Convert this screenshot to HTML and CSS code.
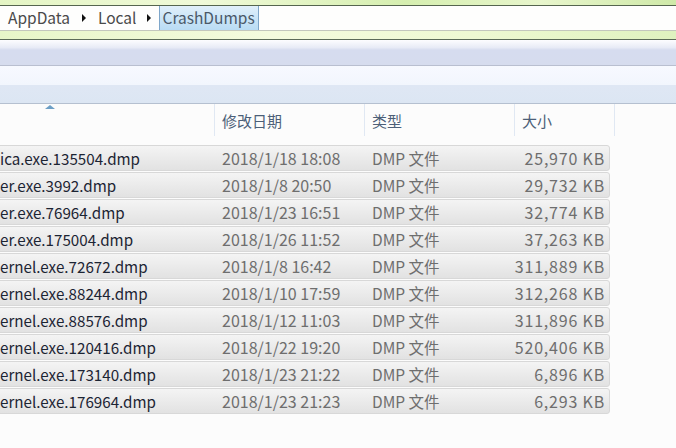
FILE: index.html
```html
<!DOCTYPE html>
<html>
<head>
<meta charset="utf-8">
<link rel="stylesheet" href="styles.css">
</head>
<body>
<div class="chrome">
  <div class="green-top"></div>
  <div class="address">
    <span class="crumb">AppData</span>
    <span class="arrow"></span>
    <span class="crumb">Local</span>
    <span class="arrow last"></span>
    <span class="crumb current">CrashDumps</span>
  </div>
  <div class="green-bottom"></div>
  <div class="lavender"></div>
  <div class="toolbar"></div>
</div>
<div class="header">
  <div class="hcell name"><span class="sort"></span></div>
  <div class="hcell date">修改日期</div>
  <div class="hcell type">类型</div>
  <div class="hcell size">大小</div>
  <div class="hcell rest"></div>
</div>
<div class="list">
  <div class="row"><span class="c-name">ica.exe.135504.dmp</span><span class="c-date">2018/1/18 18:08</span><span class="c-type">DMP 文件</span><span class="c-size">25,970 KB</span></div>
  <div class="row"><span class="c-name">er.exe.3992.dmp</span><span class="c-date">2018/1/8 20:50</span><span class="c-type">DMP 文件</span><span class="c-size">29,732 KB</span></div>
  <div class="row"><span class="c-name">er.exe.76964.dmp</span><span class="c-date">2018/1/23 16:51</span><span class="c-type">DMP 文件</span><span class="c-size">32,774 KB</span></div>
  <div class="row"><span class="c-name">er.exe.175004.dmp</span><span class="c-date">2018/1/26 11:52</span><span class="c-type">DMP 文件</span><span class="c-size">37,263 KB</span></div>
  <div class="row"><span class="c-name">ernel.exe.72672.dmp</span><span class="c-date">2018/1/8 16:42</span><span class="c-type">DMP 文件</span><span class="c-size">311,889 KB</span></div>
  <div class="row"><span class="c-name">ernel.exe.88244.dmp</span><span class="c-date">2018/1/10 17:59</span><span class="c-type">DMP 文件</span><span class="c-size">312,268 KB</span></div>
  <div class="row"><span class="c-name">ernel.exe.88576.dmp</span><span class="c-date">2018/1/12 11:03</span><span class="c-type">DMP 文件</span><span class="c-size">311,896 KB</span></div>
  <div class="row"><span class="c-name">ernel.exe.120416.dmp</span><span class="c-date">2018/1/22 19:20</span><span class="c-type">DMP 文件</span><span class="c-size">520,406 KB</span></div>
  <div class="row"><span class="c-name">ernel.exe.173140.dmp</span><span class="c-date">2018/1/23 21:22</span><span class="c-type">DMP 文件</span><span class="c-size">6,896 KB</span></div>
  <div class="row"><span class="c-name">ernel.exe.176964.dmp</span><span class="c-date">2018/1/23 21:23</span><span class="c-type">DMP 文件</span><span class="c-size">6,293 KB</span></div>
</div>
</body>
</html>
```
FILE: styles.css
```css
html, body {
  margin: 0;
  padding: 0;
}
body {
  width: 676px;
  height: 448px;
  overflow: hidden;
  background: #fcfcfc;
  font-family: "Noto Sans CJK SC", "Noto Sans", sans-serif;
}
.chrome {
  display: flex;
  flex-direction: column;
}
.green-top {
  height: 5px;
  background: linear-gradient(90deg, #e4f5c4 0%, #f0fad8 30%, #d6efb0 60%, #e8f6cc 80%, #cfe9a8 100%);
  border-bottom: 1px solid #55654f;
}
.address {
  height: 24px;
  background: #fefefd;
  border-bottom: 1px solid #c3c7bd;
  display: flex;
  align-items: stretch;
  font-size: 15.5px;
  color: #4a4a4a;
  padding-left: 8px;
}
.crumb {
  display: flex;
  align-items: center;
  line-height: 1;
}
.arrow {
  width: 0;
  height: 0;
  align-self: center;
  border-top: 4px solid transparent;
  border-bottom: 4px solid transparent;
  border-left: 4px solid #111;
  margin: 0 12px 0 12px;
}
.arrow.last {
  margin: 0 9px 0 10px;
}
.current {
  background: linear-gradient(#e1f0fb, #cbe5f7 50%, #b9dcf4);
  border: 1px solid #7ea6c9;
  border-top: none;
  border-bottom: none;
  padding: 0 3px;
  margin-left: -1px;
  color: #4a5868;
}
.green-bottom {
  height: 8px;
  background: linear-gradient(90deg, #e7f6c8 0%, #f4fbde 40%, #eef9d2 70%, #dff2bf 100%);
  border-bottom: 1px solid #5c6b58;
}
.lavender {
  height: 25px;
  background: linear-gradient(#fdfdff 0%, #e8ebf6 30%, #d6dcef 40%, #d6dcee 100%);
  border-bottom: 1px solid #b9bfd0;
}
.toolbar {
  height: 37px;
  background: linear-gradient(#f7f9ff 0%, #f2f6fd 50%, #dfe7f4 52%, #dce6f3 100%);
  border-bottom: 1px solid #b5c0d0;
}
.header {
  display: flex;
  height: 41px;
  font-size: 15px;
  color: #4c5f78;
}
.hcell {
  display: flex;
  align-items: center;
  padding-left: 7px;
  border-right: 1px solid #e0e8f3;
  box-sizing: border-box;
  height: 32px;
}
.hcell.name {
  width: 215px;
  position: relative;
}
.hcell.date { width: 150px; }
.hcell.type { width: 150px; }
.hcell.size { width: 100px; }
.hcell.rest { border-right: none; flex: 1; }
.sort {
  position: absolute;
  left: 45px;
  top: 1px;
  width: 0;
  height: 0;
  border-left: 5px solid transparent;
  border-right: 5px solid transparent;
  border-bottom: 4px solid #6d9fc6;
}
.list {
  display: flex;
  flex-direction: column;
  gap: 1px;
  margin-left: -4px;
}
.row {
  width: 614px;
  height: 26px;
  box-sizing: border-box;
  border: 1px solid #d8d8d8;
  border-radius: 3px;
  background: linear-gradient(#f4f4f4, #e9e9e9 60%, #e2e2e2);
  display: flex;
  align-items: center;
  font-size: 16px;
  color: #6e6e6e;
}
.c-name {
  width: 225px;
  padding-left: 3px;
  font-size: 15.2px;
  color: #1c2433;
  box-sizing: border-box;
}
.c-date { width: 150px; }
.c-type { width: 120px; font-size: 15.5px; }
.c-size {
  width: 114px;
  text-align: right;
  letter-spacing: 0.8px;
  padding-right: 1px;
  box-sizing: border-box;
}
```
